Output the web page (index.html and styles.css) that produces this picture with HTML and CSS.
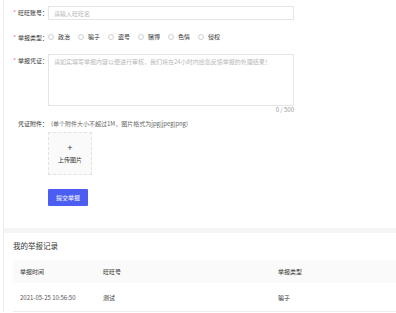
FILE: index.html
```html
<!DOCTYPE html>
<html lang="zh-CN">
<head>
<meta charset="utf-8">
<title>举报</title>
<link rel="stylesheet" href="styles.css">
</head>
<body>
<div class="page">
  <section class="card form">
    <div class="row row-account">
      <div class="label"><span class="star">*</span>旺旺账号：</div>
      <div class="input"><span class="ph">请输入旺旺名</span></div>
    </div>
    <div class="row row-type">
      <div class="label"><span class="star">*</span>举报类型：</div>
      <div class="radios">
        <span class="radio"><i class="dot"></i>政治</span>
        <span class="radio"><i class="dot"></i>骗子</span>
        <span class="radio"><i class="dot"></i>盗号</span>
        <span class="radio"><i class="dot"></i>赌博</span>
        <span class="radio"><i class="dot"></i>色情</span>
        <span class="radio"><i class="dot"></i>侵权</span>
      </div>
    </div>
    <div class="row row-proof">
      <div class="label"><span class="star">*</span>举报凭证：</div>
      <div class="field">
        <div class="textarea"><span class="ph">请如实填写举报内容以便进行审核，我们将在24小时内给您反馈举报的处理结果！</span></div>
        <div class="counter">0 / 500</div>
      </div>
    </div>
    <div class="row row-attach">
      <div class="label">凭证附件：</div>
      <div class="field">
        <div class="hint">(单个附件大小不超过1M，图片格式为jpg|jpeg|png)</div>
        <div class="upload">
          <span class="plus">+</span>
          <span class="up-text">上传图片</span>
        </div>
        <button class="submit">提交举报</button>
      </div>
    </div>
  </section>
  <section class="card records">
    <h2 class="title">我的举报记录</h2>
    <div class="table">
      <div class="tr th">
        <div class="c1">举报时间</div>
        <div class="c2">旺旺号</div>
        <div class="c3">举报类型</div>
      </div>
      <div class="tr td">
        <div class="c1">2021-05-25 10:56:50</div>
        <div class="c2">测试</div>
        <div class="c3">骗子</div>
      </div>
    </div>
  </section>
</div>
</body>
</html>
```
FILE: styles.css
```css
* { box-sizing: border-box; }
html, body {
  margin: 0;
  padding: 0;
  background: #fff;
  overflow: hidden;
}
body {
  font-family: "Noto Sans CJK SC", "Liberation Sans", sans-serif;
  font-size: 6px;
  color: #333;
  width: 396px;
  height: 313px;
}
.page {
  margin-left: 3px;
  border-left: 1px solid #ececec;
  background: #f5f5f5;
  display: flex;
  flex-direction: column;
  gap: 5px;
}
.card { background: #fff; }

.form {
  padding-top: 6px;
  padding-bottom: 22px;
}
.row { display: flex; }
.label {
  width: 44px;
  flex: none;
  text-align: right;
  color: #333;
  white-space: nowrap;
}
.star { color: #f56c6c; margin-right: 2px; }

.row-account { align-items: center; height: 14px; }
.row-account .label { line-height: 14px; }
.input {
  width: 246px;
  height: 14px;
  border: 1px solid #e6e6e6;
  display: flex;
  align-items: center;
  padding-left: 5px;
}
.ph { color: #b8b8b8; white-space: nowrap; }

.row-type { margin-top: 12px; height: 10px; align-items: center; }
.radios { display: flex; align-items: center; gap: 8px; }
.radio {
  display: inline-flex;
  align-items: center;
  gap: 4px;
  color: #333;
  line-height: 10px;
}
.dot {
  display: inline-block;
  width: 6px;
  height: 6px;
  border: 1px solid #cfcfcf;
  border-radius: 50%;
  background: #fff;
}

.row-proof { margin-top: 12px; align-items: flex-start; }
.row-proof .label { line-height: 14px; }
.field { width: 246px; display: flex; flex-direction: column; }
.textarea {
  height: 52px;
  border: 1px solid #e6e6e6;
  padding: 0 5px;
  line-height: 14px;
  overflow: hidden;
}
.counter {
  text-align: right;
  color: #999;
  line-height: 8px;
}

.row-attach { margin-top: 6px; align-items: flex-start; }
.row-attach .label { line-height: 8px; }
.hint {
  line-height: 8px;
  color: #666;
  margin-left: 3px;
  white-space: nowrap;
}
.upload {
  margin-top: 4px;
  width: 44px;
  height: 43px;
  border: 1px dashed #e2e2e2;
  background: #fafafa;
  display: flex;
  flex-direction: column;
  align-items: center;
  justify-content: center;
  color: #333;
}
.plus { font-size: 9px; line-height: 9px; font-family: "Liberation Sans", sans-serif; }
.up-text { line-height: 9px; margin-top: 2px; }
.submit {
  margin-top: 14px;
  width: 40px;
  height: 17px;
  border: none;
  border-radius: 1px;
  background: #4c5ef2;
  color: #fff;
  font-family: inherit;
  font-size: 6px;
  padding: 0;
  cursor: pointer;
}

.records { padding: 8px 0 0 9px; }
.title {
  margin: 0;
  font-size: 7.5px;
  font-weight: normal;
  line-height: 10px;
  color: #333;
}
.table { margin-top: 9px; }
.tr { display: flex; align-items: center; }
.th { height: 23px; background: #fafafa; }
.td { height: 29px; border-bottom: 1px solid #ededed; }
.c1 { width: 90px; padding-left: 7px; flex: none; }
.c2 { width: 175px; flex: none; }
.c3 { flex: 1; }
.td .c1 { color: #555; }
```
